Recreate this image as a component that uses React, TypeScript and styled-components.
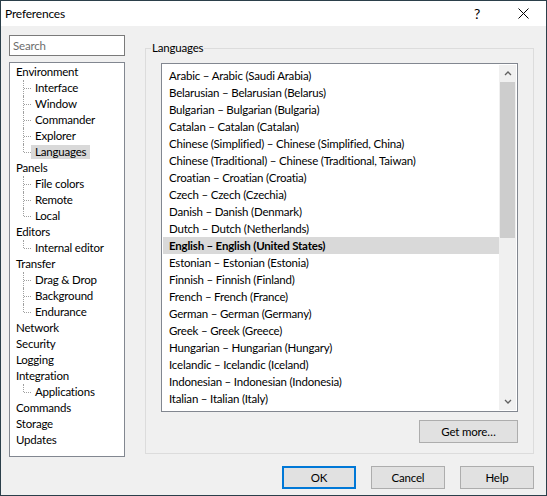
import React from 'react';
import styled, { createGlobalStyle } from 'styled-components';

const GlobalStyle = createGlobalStyle`
  html, body {
    margin: 0;
    padding: 0;
    background: #ffffff;
  }
  * {
    box-sizing: border-box;
  }
`;

const Window = styled.div`
  width: 547px;
  height: 496px;
  border: 1px solid #2b3f4a;
  background: #f0f0f0;
  display: flex;
  flex-direction: column;
  font-family: Lato, 'Noto Sans', 'Liberation Sans', sans-serif;
  font-size: 11.5px;
  letter-spacing: -0.2px;
  color: #000;
`;

const TitleBar = styled.div`
  height: 25px;
  background: #ffffff;
  display: flex;
  align-items: center;
  padding-left: 4px;
  flex-shrink: 0;
`;

const Title = styled.div`
  flex: 1;
  font-size: 12px;
`;

const TitleButton = styled.div`
  width: 46px;
  height: 25px;
  display: flex;
  align-items: center;
  justify-content: center;
  font-size: 14px;
`;

const Body = styled.div`
  flex: 1;
  display: flex;
  flex-direction: column;
  padding: 9px 12px 0 8px;
`;

const Main = styled.div`
  display: flex;
  align-items: flex-start;
  gap: 20px;
`;

const LeftColumn = styled.div`
  width: 116px;
  display: flex;
  flex-direction: column;
  gap: 6px;
`;

const SearchBox = styled.input`
  width: 116px;
  height: 21px;
  border: 1px solid #7a7a7a;
  background: #fff;
  padding: 0 3px;
  font-family: inherit;
  font-size: 11.5px;
  letter-spacing: -0.2px;
  outline: none;
  &::placeholder {
    color: #6d6d6d;
  }
`;

const Tree = styled.div`
  height: 395px;
  border: 1px solid #828790;
  background: #fff;
  padding: 1px 0 0 5px;
`;

const TreeRow = styled.div`
  height: 16px;
  display: flex;
  align-items: center;
  line-height: 14px;
`;

const Connector = styled.span<{ $last?: boolean }>`
  position: relative;
  width: 8px;
  height: 16px;
  margin-left: 8px;
  flex-shrink: 0;
  &::before {
    content: '';
    position: absolute;
    left: 0;
    top: 0;
    height: ${p => (p.$last ? '8px' : '16px')};
    border-left: 1px dotted #a0a0a0;
  }
  &::after {
    content: '';
    position: absolute;
    left: 1px;
    right: 0;
    top: 8px;
    border-top: 1px dotted #a0a0a0;
  }
`;

const TreeLabel = styled.span<{ $selected?: boolean; $child?: boolean }>`
  padding: 0 ${p => (p.$child ? '4px' : '1px')};
  height: 14px;
  background: ${p => (p.$selected ? '#d9d9d9' : 'transparent')};
  white-space: nowrap;
`;

const GroupBox = styled.fieldset`
  width: 389px;
  height: 414px;
  margin: 5px 0 0 0;
  border: 1px solid #dcdcdc;
  padding: 7px 15px 10px 15px;
  display: flex;
  flex-direction: column;
  align-items: flex-end;
  gap: 8px;
`;

const Legend = styled.legend`
  padding: 0 1px;
  margin-left: -10px;
  line-height: 16px;
  font-size: 11.5px;
`;

const ListBox = styled.div`
  width: 357px;
  height: 349px;
  border: 1px solid #828790;
  background: #fff;
  display: flex;
  padding: 1px;
`;

const ListItems = styled.div`
  flex: 1;
  padding-top: 2px;
  overflow: hidden;
`;

const ListItem = styled.div<{ $selected?: boolean }>`
  height: 17px;
  line-height: 17px;
  padding-left: 6px;
  white-space: nowrap;
  font-weight: ${p => (p.$selected ? 700 : 400)};
  background: ${p => (p.$selected ? '#d9d9d9' : 'transparent')};
`;

const ScrollBar = styled.div`
  width: 17px;
  background: #f0f0f0;
  display: flex;
  flex-direction: column;
`;

const ScrollArrow = styled.div`
  height: 17px;
  display: flex;
  align-items: center;
  justify-content: center;
  flex-shrink: 0;
`;

const ScrollTrack = styled.div`
  flex: 1;
  padding: 0 1px;
`;

const ScrollThumb = styled.div`
  height: 156px;
  background: #cdcdcd;
`;

const Button = styled.button<{ $default?: boolean }>`
  width: 74px;
  height: 23px;
  background: #e1e1e1;
  border: ${p => (p.$default ? '2px solid #0078d7' : '1px solid #adadad')};
  font-family: inherit;
  font-size: 11.5px;
  letter-spacing: -0.2px;
  color: #000;
  padding: 0;
`;

const WideButton = styled(Button)`
  width: 99px;
`;

const Footer = styled.div`
  display: flex;
  justify-content: flex-end;
  gap: 15px;
  margin-top: 9px;
`;

const Chevron: React.FC<{ down?: boolean }> = ({ down }) => (
  <svg width="8" height="5" viewBox="0 0 8 5">
    <path
      d={down ? 'M1 1 L4 4 L7 1' : 'M1 4 L4 1 L7 4'}
      fill="none"
      stroke="#606060"
      strokeWidth="1.3"
    />
  </svg>
);

type TreeNode = { label: string; children?: string[] };

const tree: TreeNode[] = [
  { label: 'Environment', children: ['Interface', 'Window', 'Commander', 'Explorer', 'Languages'] },
  { label: 'Panels', children: ['File colors', 'Remote', 'Local'] },
  { label: 'Editors', children: ['Internal editor'] },
  { label: 'Transfer', children: ['Drag & Drop', 'Background', 'Endurance'] },
  { label: 'Network' },
  { label: 'Security' },
  { label: 'Logging' },
  { label: 'Integration', children: ['Applications'] },
  { label: 'Commands' },
  { label: 'Storage' },
  { label: 'Updates' },
];

const languages = [
  'Arabic – Arabic (Saudi Arabia)',
  'Belarusian – Belarusian (Belarus)',
  'Bulgarian – Bulgarian (Bulgaria)',
  'Catalan – Catalan (Catalan)',
  'Chinese (Simplified) – Chinese (Simplified, China)',
  'Chinese (Traditional) – Chinese (Traditional, Taiwan)',
  'Croatian – Croatian (Croatia)',
  'Czech – Czech (Czechia)',
  'Danish – Danish (Denmark)',
  'Dutch – Dutch (Netherlands)',
  'English – English (United States)',
  'Estonian – Estonian (Estonia)',
  'Finnish – Finnish (Finland)',
  'French – French (France)',
  'German – German (Germany)',
  'Greek – Greek (Greece)',
  'Hungarian – Hungarian (Hungary)',
  'Icelandic – Icelandic (Iceland)',
  'Indonesian – Indonesian (Indonesia)',
  'Italian – Italian (Italy)',
];

const App: React.FC = () => {
  return (
    <>
      <GlobalStyle />
      <Window>
        <TitleBar>
          <Title>Preferences</Title>
          <TitleButton>?</TitleButton>
          <TitleButton>
            <svg width="11" height="11" viewBox="0 0 11 11">
              <path d="M0.5 0.5 L10.5 10.5 M10.5 0.5 L0.5 10.5" stroke="#000" strokeWidth="1" />
            </svg>
          </TitleButton>
        </TitleBar>
        <Body>
          <Main>
            <LeftColumn>
              <SearchBox placeholder="Search" />
              <Tree>
                {tree.map(node => (
                  <React.Fragment key={node.label}>
                    <TreeRow>
                      <TreeLabel>{node.label}</TreeLabel>
                    </TreeRow>
                    {node.children?.map((child, i) => (
                      <TreeRow key={child}>
                        <Connector $last={i === node.children!.length - 1} />
                        <TreeLabel $child $selected={child === 'Languages'}>
                          {child}
                        </TreeLabel>
                      </TreeRow>
                    ))}
                  </React.Fragment>
                ))}
              </Tree>
            </LeftColumn>
            <GroupBox>
              <Legend>Languages</Legend>
              <ListBox>
                <ListItems>
                  {languages.map(lang => (
                    <ListItem key={lang} $selected={lang.startsWith('English')}>
                      {lang}
                    </ListItem>
                  ))}
                </ListItems>
                <ScrollBar>
                  <ScrollArrow>
                    <Chevron />
                  </ScrollArrow>
                  <ScrollTrack>
                    <ScrollThumb />
                  </ScrollTrack>
                  <ScrollArrow>
                    <Chevron down />
                  </ScrollArrow>
                </ScrollBar>
              </ListBox>
              <WideButton>Get more…</WideButton>
            </GroupBox>
          </Main>
          <Footer>
            <Button $default>OK</Button>
            <Button>Cancel</Button>
            <Button>Help</Button>
          </Footer>
        </Body>
      </Window>
    </>
  );
};

export default App;
